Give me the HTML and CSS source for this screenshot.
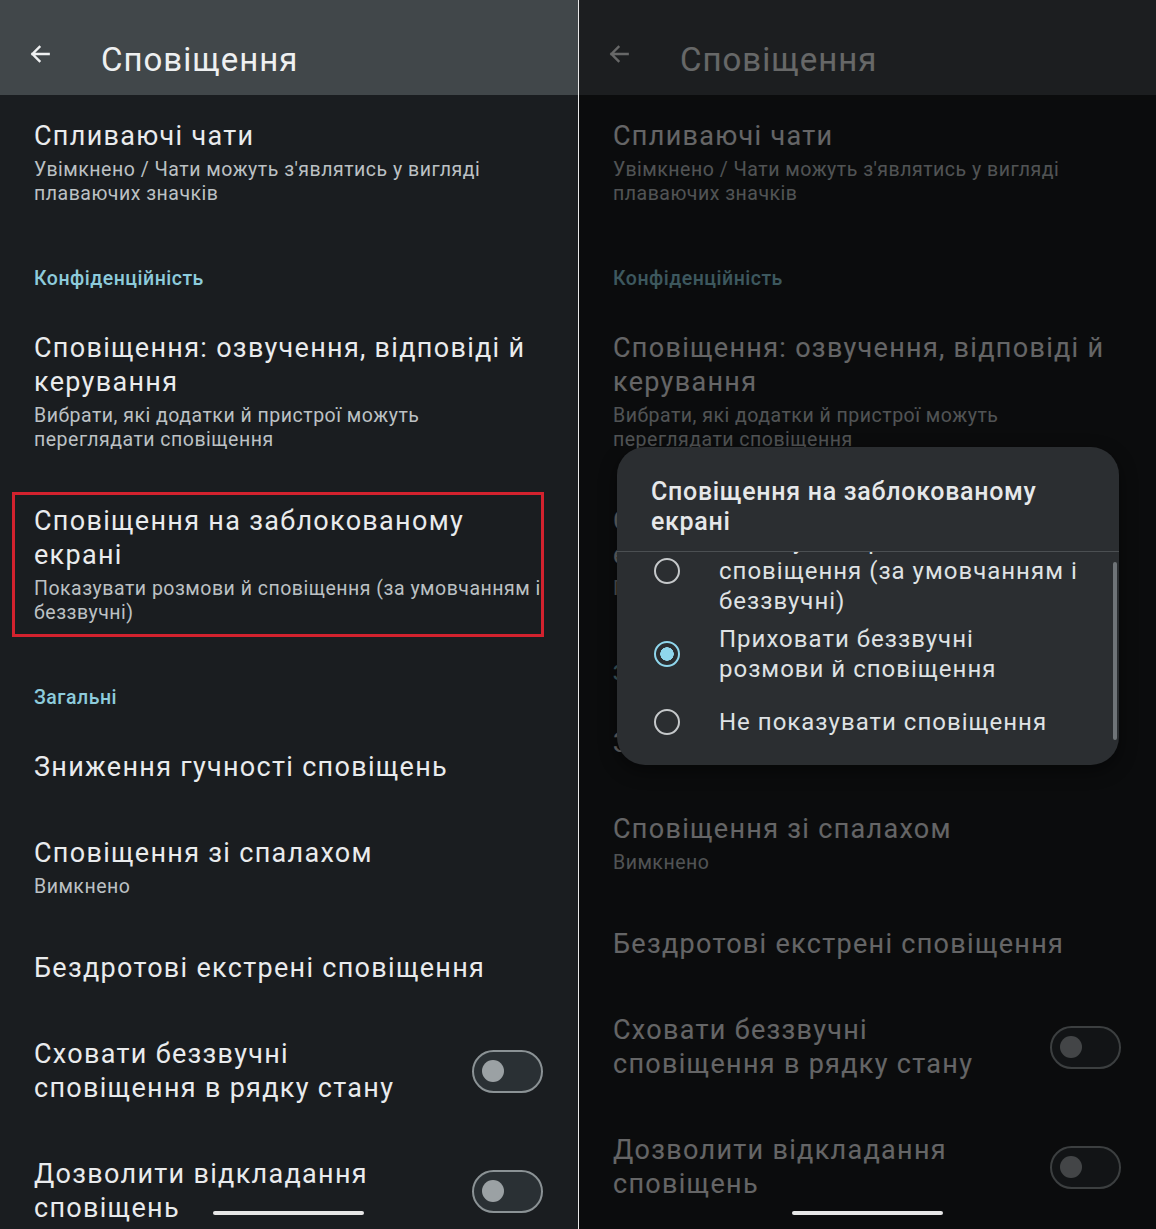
FILE: index.html
```html
<!DOCTYPE html>
<html lang="uk">
<head>
  <meta charset="UTF-8">
  <meta name="viewport" content="width=device-width, initial-scale=1.0">
  <title>Сповіщення</title>
  <link rel="stylesheet" href="styles.css">
</head>
<body>

  <div class="screens">

    <!-- Left screen: settings list -->
    <section class="phone">
      <header class="appbar">
        <svg class="back" viewBox="0 0 24 24" width="26" height="26"><path d="M20 12H5M11.5 5.5L5 12l6.5 6.5" fill="none" stroke="currentColor" stroke-width="2.2" stroke-linecap="square"/></svg>
        <h1 class="appbar-title">Сповіщення</h1>
      </header>

      <div class="prefs">
        <div class="pref pref--first">
          <div class="pref-text">
            <div class="pref-title">Спливаючі чати</div>
            <div class="pref-summary">Увімкнено / Чати можуть з'являтись у вигляді плаваючих значків</div>
          </div>
        </div>

        <div class="pref-category">Конфіденційність</div>

        <div class="pref">
          <div class="pref-text">
            <div class="pref-title">Сповіщення: озвучення, відповіді й керування</div>
            <div class="pref-summary">Вибрати, які додатки й пристрої можуть переглядати сповіщення</div>
          </div>
        </div>

        <div class="pref pref--marked">
          <div class="pref-text">
            <div class="pref-title">Сповіщення на заблокованому екрані</div>
            <div class="pref-summary">Показувати розмови й сповіщення (за умовчанням і беззвучні)</div>
          </div>
        </div>

        <div class="pref-category">Загальні</div>

        <div class="pref">
          <div class="pref-text">
            <div class="pref-title">Зниження гучності сповіщень</div>
          </div>
        </div>

        <div class="pref">
          <div class="pref-text">
            <div class="pref-title">Сповіщення зі спалахом</div>
            <div class="pref-summary">Вимкнено</div>
          </div>
        </div>

        <div class="pref">
          <div class="pref-text">
            <div class="pref-title">Бездротові екстрені сповіщення</div>
          </div>
        </div>

        <div class="pref">
          <div class="pref-text pref-text--narrow">
            <div class="pref-title">Сховати беззвучні сповіщення в рядку стану</div>
          </div>
          <span class="switch"></span>
        </div>

        <div class="pref">
          <div class="pref-text pref-text--narrow">
            <div class="pref-title">Дозволити відкладання сповіщень</div>
          </div>
          <span class="switch"></span>
        </div>
      </div>

      <div class="home-bar"></div>
    </section>

    <!-- Right screen: same list with the lock screen dialog open -->
    <section class="phone">
      <header class="appbar">
        <svg class="back" viewBox="0 0 24 24" width="26" height="26"><path d="M20 12H5M11.5 5.5L5 12l6.5 6.5" fill="none" stroke="currentColor" stroke-width="2.2" stroke-linecap="square"/></svg>
        <h1 class="appbar-title">Сповіщення</h1>
      </header>

      <div class="prefs">
        <div class="pref pref--first">
          <div class="pref-text">
            <div class="pref-title">Спливаючі чати</div>
            <div class="pref-summary">Увімкнено / Чати можуть з'являтись у вигляді плаваючих значків</div>
          </div>
        </div>

        <div class="pref-category">Конфіденційність</div>

        <div class="pref">
          <div class="pref-text">
            <div class="pref-title">Сповіщення: озвучення, відповіді й керування</div>
            <div class="pref-summary">Вибрати, які додатки й пристрої можуть переглядати сповіщення</div>
          </div>
        </div>

        <div class="pref">
          <div class="pref-text">
            <div class="pref-title">Сповіщення на заблокованому екрані</div>
            <div class="pref-summary">Приховати беззвучні розмови й сповіщення</div>
          </div>
        </div>

        <div class="pref-category">Загальні</div>

        <div class="pref">
          <div class="pref-text">
            <div class="pref-title">Зниження гучності сповіщень</div>
          </div>
        </div>

        <div class="pref">
          <div class="pref-text">
            <div class="pref-title">Сповіщення зі спалахом</div>
            <div class="pref-summary">Вимкнено</div>
          </div>
        </div>

        <div class="pref">
          <div class="pref-text">
            <div class="pref-title">Бездротові екстрені сповіщення</div>
          </div>
        </div>

        <div class="pref">
          <div class="pref-text pref-text--narrow">
            <div class="pref-title">Сховати беззвучні сповіщення в рядку стану</div>
          </div>
          <span class="switch"></span>
        </div>

        <div class="pref">
          <div class="pref-text pref-text--narrow">
            <div class="pref-title">Дозволити відкладання сповіщень</div>
          </div>
          <span class="switch"></span>
        </div>
      </div>

      <div class="scrim"></div>

      <div class="dialog">
        <div class="dialog-title">Сповіщення на заблокованому екрані</div>
        <div class="dialog-list">
          <div class="dialog-scroll">
            <div class="choice">
              <span class="radio"></span>
              <span class="choice-label">Показувати розмови й сповіщення (за умовчанням і беззвучні)</span>
            </div>
            <div class="choice">
              <span class="radio radio--on"></span>
              <span class="choice-label">Приховати беззвучні розмови й сповіщення</span>
            </div>
            <div class="choice">
              <span class="radio"></span>
              <span class="choice-label">Не показувати сповіщення</span>
            </div>
          </div>
          <div class="scroll-thumb"></div>
        </div>
      </div>

      <div class="home-bar"></div>
    </section>

  </div>

</body>
</html>
```

FILE: styles.css
```css
/* Global */
body {
  margin: 0;
  font-family: Roboto, "Noto Sans", sans-serif;
  background: #e9e9e9;
}

.screens {
  display: flex;
  gap: 1px;
  height: 1229px;
  overflow: hidden;
}

/* Phone screen */
.phone {
  position: relative;
  width: 578px;
  flex-shrink: 0;
  background-color: #1a1d20;
  color: #e9ebed;
  overflow: hidden;
}

.phone + .phone {
  width: 577px;
}

/* Top app bar */
.appbar {
  height: 95px;
  box-sizing: border-box;
  display: flex;
  align-items: flex-end;
  padding: 0 0 15px 27px;
  background-color: #41474a;
}

.back {
  color: #eef0f1;
  margin-bottom: 13px;
  margin-right: 48px;
}

.appbar-title {
  margin: 0;
  font-size: 33px;
  font-weight: 400;
  line-height: 40px;
  letter-spacing: 1px;
  color: #eef0f1;
}

/* Preference rows */
.pref {
  position: relative;
  display: flex;
  align-items: center;
  padding: 26px 30px 26px 34px;
}

.pref--first {
  padding-top: 24px;
}

.pref-text {
  width: 509px;
}

.pref-text--narrow {
  width: 392px;
  margin-right: auto;
}

.pref-title {
  font-size: 27px;
  line-height: 34px;
  letter-spacing: 1.3px;
}

.pref-summary {
  margin-top: 5px;
  font-size: 19.5px;
  line-height: 24px;
  color: #bcc1c4;
  letter-spacing: 0.5px;
}

.pref-category {
  padding: 35px 34px 14px;
  font-size: 19.5px;
  line-height: 24px;
  font-weight: 500;
  letter-spacing: 0.5px;
  color: #8dcbdb;
}

/* Red annotation frame */
.pref--marked::after {
  content: "";
  position: absolute;
  top: 14px;
  bottom: 14px;
  left: 12px;
  right: 34px;
  border: 3px solid #d3222e;
}

/* Switch (off) */
.switch {
  position: relative;
  width: 71px;
  height: 43px;
  box-sizing: border-box;
  border: 2.5px solid #8b9295;
  border-radius: 22px;
  background-color: #2a3034;
  flex-shrink: 0;
  margin-right: 5px;
}

.switch::before {
  content: "";
  position: absolute;
  left: 8px;
  top: 8px;
  width: 22px;
  height: 22px;
  border-radius: 50%;
  background-color: #9ba1a4;
}

/* Gesture bar */
.home-bar {
  position: absolute;
  left: 213px;
  bottom: 14px;
  width: 151px;
  height: 4px;
  border-radius: 2px;
  background-color: #e6e6e6;
  z-index: 3;
}

/* Dim layer behind the dialog */
.scrim {
  position: absolute;
  inset: 0;
  background: rgba(0, 0, 0, 0.57);
}

/* Dialog */
.dialog {
  position: absolute;
  left: 38px;
  top: 447px;
  width: 502px;
  padding-bottom: 9px;
  border-radius: 28px;
  background-color: #2b2e31;
  box-shadow: 0 6px 18px rgba(0, 0, 0, 0.45);
  overflow: hidden;
}

.dialog-title {
  padding: 30px 34px 14px;
  font-size: 25px;
  line-height: 30px;
  font-weight: 500;
  letter-spacing: 0.7px;
  color: #e6e8ea;
  border-bottom: 1px solid #4b4f52;
}

.dialog-list {
  position: relative;
  height: 204px;
  overflow: hidden;
}

.dialog-scroll {
  margin-top: -30px;
}

.choice {
  display: flex;
  align-items: center;
  gap: 39px;
  min-height: 68px;
  box-sizing: border-box;
  padding: 4px 38px 4px 37px;
}

.choice-label {
  font-size: 24px;
  line-height: 30px;
  color: #dfe2e4;
  letter-spacing: 1px;
}

.radio {
  width: 26px;
  height: 26px;
  box-sizing: border-box;
  border: 2.5px solid #c5c8ca;
  border-radius: 50%;
  flex-shrink: 0;
}

.radio--on {
  border-color: #8fd6ec;
  background: radial-gradient(circle, #8fd6ec 0 6.5px, transparent 7px);
}

.scroll-thumb {
  position: absolute;
  right: 2px;
  top: 10px;
  width: 4px;
  height: 178px;
  border-radius: 2px;
  background-color: #6f7478;
}
```
